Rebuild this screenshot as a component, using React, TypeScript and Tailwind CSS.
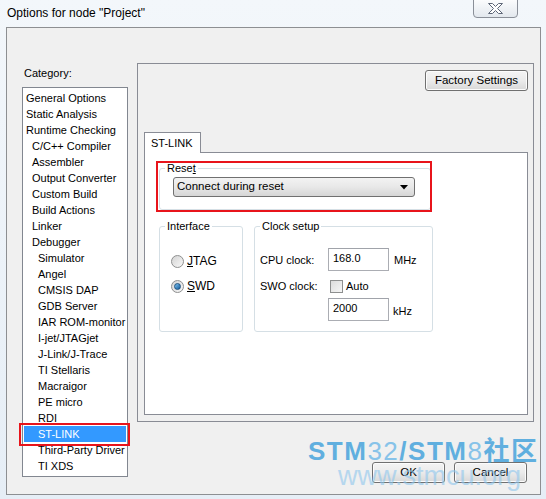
import React from 'react';

type Category = { label: string; level: 0 | 1 | 2 };

const CATEGORIES: Category[] = [
  { label: 'General Options', level: 0 },
  { label: 'Static Analysis', level: 0 },
  { label: 'Runtime Checking', level: 0 },
  { label: 'C/C++ Compiler', level: 1 },
  { label: 'Assembler', level: 1 },
  { label: 'Output Converter', level: 1 },
  { label: 'Custom Build', level: 1 },
  { label: 'Build Actions', level: 1 },
  { label: 'Linker', level: 1 },
  { label: 'Debugger', level: 1 },
  { label: 'Simulator', level: 2 },
  { label: 'Angel', level: 2 },
  { label: 'CMSIS DAP', level: 2 },
  { label: 'GDB Server', level: 2 },
  { label: 'IAR ROM-monitor', level: 2 },
  { label: 'I-jet/JTAGjet', level: 2 },
  { label: 'J-Link/J-Trace', level: 2 },
  { label: 'TI Stellaris', level: 2 },
  { label: 'Macraigor', level: 2 },
  { label: 'PE micro', level: 2 },
  { label: 'RDI', level: 2 },
  { label: 'ST-LINK', level: 2 },
  { label: 'Third-Party Driver', level: 2 },
  { label: 'TI XDS', level: 2 },
];

const INDENT = ['pl-[2px]', 'pl-[8px]', 'pl-[14px]'];
const SELECTED = 'ST-LINK';

export default function App() {
  return (
    <div
      className="relative h-[499px] w-[546px] overflow-hidden bg-gradient-to-b from-[#f3f7fb] to-[#e6eef6] text-[11px] text-black"
      style={{ fontFamily: '"Liberation Sans", Arial, sans-serif' }}
    >
      <TitleBar />

      <div className="ml-[6px] mr-[5px] h-[468px] border border-[#8d8f92] bg-[#f0f0f0]">
        <div className="flex pl-[15px] pt-[35px]">
          <CategoryColumn />

          <div className="ml-[9px] flex flex-col">
            <OptionsPanel />
            <div className="mt-[40px] flex justify-end gap-[9px] pr-[7px]">
              <WinButton className="w-[73px]">OK</WinButton>
              <WinButton className="w-[73px]">Cancel</WinButton>
            </div>
          </div>
        </div>
      </div>

      <Watermark />
    </div>
  );
}

function TitleBar() {
  return (
    <div className="flex h-[27px] items-start justify-between">
      <span className="pl-[7px] pt-[6px] text-[12px] leading-[14px] text-black">Options for node "Project"</span>
      <button className="mr-[28px] mt-[-1px] flex h-[19px] w-[45px] items-center justify-center rounded-b-[4px] border border-[#8a8f98] bg-gradient-to-b from-[#fbfcfd] to-[#e3e8ee]">
        <svg width="15" height="11" viewBox="0 0 15 11">
          <path
            d="M0.5 0.5H4.5L7.5 3.5L10.5 0.5H14.5L9.5 5.5L14.5 10.5H10.5L7.5 7.5L4.5 10.5H0.5L5.5 5.5Z"
            fill="#ffffff"
            stroke="#5d6677"
            strokeWidth="1"
          />
        </svg>
      </button>
    </div>
  );
}

function CategoryColumn() {
  return (
    <div className="flex w-[106px] flex-col">
      <span className="h-[24px] pl-[2px] pt-[4px] leading-[13px]">Category:</span>
      <div className="h-[390px] border border-[#828790] bg-white pt-[2px]">
        {CATEGORIES.map((c) => {
          const active = c.label === SELECTED;
          return (
            <div key={c.label} className="relative mx-[1px]">
              <div
                className={`h-[16px] whitespace-nowrap leading-[16px] ${INDENT[c.level]} ${
                  active ? 'bg-[#3399ff] text-white' : 'text-[#000]'
                }`}
              >
                {c.label}
              </div>
              {active && (
                <div className="pointer-events-none absolute -left-[5px] -right-[4px] -top-[3px] -bottom-[4px] border-2 border-[#e8141b]" />
              )}
            </div>
          );
        })}
      </div>
    </div>
  );
}

function OptionsPanel() {
  return (
    <div className="flex h-[359px] w-[397px] flex-col border border-[#898c95] pb-[6px] pl-[6px] pr-[5px]">
      <div className="flex justify-end pt-[6px]">
        <WinButton className="w-[103px]">Factory Settings</WinButton>
      </div>

      <div className="mt-[41px] flex">
        <div className="relative z-10 -mb-px h-[21px] w-[57px] border border-b-0 border-[#898c95] bg-white pl-[6px] pt-[3px] leading-[14px]">
          ST-LINK
        </div>
      </div>

      <div className="flex-1 border border-[#898c95] bg-white pl-[14px] pt-[9px]">
        <div className="relative w-[272px]">
          <fieldset className="h-[48px] rounded-[3px] border border-[#d5dfe5] pl-[5px]">
            <legend className="px-[2px] leading-[13px]">
              Rese<span className="underline">t</span>
            </legend>
            <div className="ml-[8px] mt-[2px] flex h-[20px] w-[242px] items-center justify-between rounded-[3px] border border-[#707070] bg-gradient-to-b from-[#f3f3f3] via-[#e8e8e8] to-[#d6d6d6] pl-[3px] pr-[6px]">
              <span className="text-[11.5px]">Connect during reset</span>
              <svg width="8" height="5" viewBox="0 0 8 5">
                <path d="M0 0H8L4 4.5Z" fill="#000" />
              </svg>
            </div>
          </fieldset>
          <div className="pointer-events-none absolute -left-[3px] -right-[1px] -top-[1px] -bottom-[2px] border-2 border-[#e8141b]" />
        </div>

        <div className="mt-[10px] flex gap-[11px]">
          <fieldset className="h-[112px] w-[84px] rounded-[3px] border border-[#d5dfe5] pl-[5px]">
            <legend className="px-[2px] leading-[13px]">Interface</legend>
            <div className="ml-[6px] mt-[20px] flex flex-col gap-[9px]">
              <RadioRow hot="J" rest="TAG" checked={false} />
              <RadioRow hot="S" rest="WD" checked />
            </div>
          </fieldset>

          <fieldset className="h-[112px] w-[179px] rounded-[3px] border border-[#d5dfe5] pl-[5px]">
            <legend className="px-[2px] leading-[13px]">Clock setup</legend>
            <div className="mt-[15px] flex flex-col">
              <div className="flex items-center">
                <span className="w-[68px] pt-[2px]">CPU clock:</span>
                <TextBox value="168.0" />
                <span className="ml-[5px] pt-[2px]">MHz</span>
              </div>
              <div className="mt-[7px] flex h-[16px] items-center">
                <span className="w-[68px]">SWO clock:</span>
                <span className="ml-[2px] h-[13px] w-[13px] border border-[#8e8f8f] bg-gradient-to-br from-[#dcdcdc] to-[#f6f6f6]" />
                <span className="ml-[3px]">Auto</span>
              </div>
              <div className="mt-[4px] flex items-center pl-[68px]">
                <TextBox value="2000" />
                <span className="ml-[4px] pt-[4px]">kHz</span>
              </div>
            </div>
          </fieldset>
        </div>
      </div>
    </div>
  );
}

function RadioRow({ hot, rest, checked }: { hot: string; rest: string; checked: boolean }) {
  return (
    <div className="flex h-[16px] items-center gap-[3px]">
      <span className="flex h-[13px] w-[13px] items-center justify-center rounded-full border border-[#8e8f8f] bg-gradient-to-br from-[#d4d4d4] to-[#f8f8f8]">
        {checked && (
          <span className="h-[7px] w-[7px] rounded-full border border-[#1c5180] bg-gradient-to-br from-[#7dc3f0] to-[#0d5b9a]" />
        )}
      </span>
      <span className="text-[12px]">
        <span className="underline">{hot}</span>
        {rest}
      </span>
    </div>
  );
}

function TextBox({ value }: { value: string }) {
  return (
    <div className="h-[23px] w-[61px] border border-[#abadb3] border-t-[#a0a3aa] bg-white pl-[4px] pt-[3px] leading-[13px]">
      {value}
    </div>
  );
}

function WinButton({ className, children }: { className: string; children: React.ReactNode }) {
  return (
    <button
      className={`flex h-[21px] items-center justify-center rounded-[3px] border border-[#707070] bg-gradient-to-b from-[#f4f4f4] via-[#ebebeb] to-[#d8d8d8] text-[11.5px] shadow-[inset_0_0_0_1px_#fcfcfc] ${className}`}
    >
      {children}
    </button>
  );
}

// forum watermark stamped over the lower right corner
function Watermark() {
  return (
    <div className="pointer-events-none absolute left-[308px] top-[437px] flex flex-col opacity-80">
      <span
        className="whitespace-nowrap text-[26px] font-bold leading-[28px] tracking-[1.5px] text-[#3d9fdc]"
        style={{ fontFamily: '"Liberation Sans", "Noto Sans CJK SC", sans-serif' }}
      >
        STM<span className="font-normal text-[#6db8e8]">32</span>/STM
        <span className="font-normal text-[#6db8e8]">8</span>社区
      </span>
      <span className="-mt-[4px] ml-[30px] whitespace-nowrap text-[27px] leading-[30px] text-[#8fc7ee] opacity-75">
        www.stmcu.org
      </span>
    </div>
  );
}
